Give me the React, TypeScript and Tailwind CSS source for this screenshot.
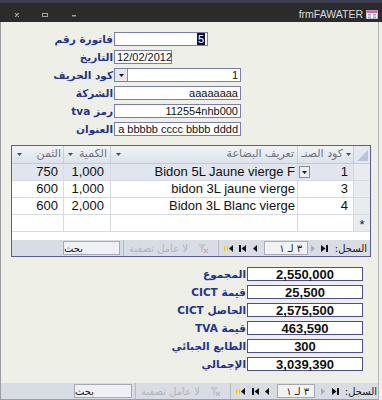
import React from 'react';

const LABEL = "text-[#25338e] font-bold text-[10.5px] leading-none whitespace-nowrap font-['DejaVu_Sans',sans-serif]";

type Field = { label: string; width: string; value: React.ReactNode; align: 'left' | 'right' };

const fields: Field[] = [
  {
    label: 'فاتورة رقم',
    width: 'w-[94px]',
    align: 'right',
    value: <span className="bg-[#101040] text-white px-[1px] leading-[10px]">5</span>,
  },
  { label: 'التاريخ', width: 'w-[58px]', align: 'left', value: '12/02/2012' },
  { label: 'كود الحريف', width: 'w-[127px]', align: 'right', value: '1' },
  { label: 'الشركة', width: 'w-[127px]', align: 'right', value: 'aaaaaaaa' },
  { label: 'رمز tva', width: 'w-[127px]', align: 'right', value: '112554nhb000' },
  { label: 'العنوان', width: 'w-[127px]', align: 'right', value: 'a bbbbb cccc bbbb dddd' },
];

const totals = [
  { label: 'المجموع', value: '2,550,000' },
  { label: 'قيمة CICT', value: '25,500' },
  { label: 'الحاصل CICT', value: '2,575,500' },
  { label: 'قيمة TVA', value: '463,590' },
  { label: 'الطابع الجبائي', value: '300' },
  { label: 'الإجمالي', value: '3,039,390' },
];

const rows = [
  { price: '750', qty: '1,000', desc: 'Bidon 5L Jaune vierge F', code: '1', current: true },
  { price: '600', qty: '1,000', desc: 'bidon 3L jaune vierge', code: '3', current: false },
  { price: '600', qty: '2,000', desc: 'Bidon 3L Blanc vierge', code: '4', current: false },
];

const Arrow = () => (
  <svg width="5" height="3" viewBox="0 0 5 3" className="shrink-0">
    <polygon points="0,0 5,0 2.5,3" fill="#4a4e5a" />
  </svg>
);

const FirstBtn = () => (
  <svg width="7" height="7" viewBox="0 0 7 7">
    <polygon points="0,0 4.5,3.5 0,7" fill="#111" />
    <rect x="5" y="0" width="2" height="7" fill="#111" />
  </svg>
);
const PrevBtn = () => (
  <svg width="4" height="7" viewBox="0 0 4 7">
    <polygon points="0,0 4,3.5 0,7" fill="#a9adb6" />
  </svg>
);
const NextBtn = () => (
  <svg width="4" height="7" viewBox="0 0 4 7">
    <polygon points="4,0 0,3.5 4,7" fill="#111" />
  </svg>
);
const LastBtn = () => (
  <svg width="7" height="7" viewBox="0 0 7 7">
    <rect x="0" y="0" width="2" height="7" fill="#111" />
    <polygon points="7,0 2.5,3.5 7,7" fill="#111" />
  </svg>
);
const NewBtn = () => (
  <svg width="9" height="7" viewBox="0 0 9 7">
    <rect x="0" y="1.5" width="4" height="4" fill="#f2c200" />
    <rect x="1" y="0.5" width="2" height="6" fill="#ffe060" />
    <polygon points="9,0 5,3.5 9,7" fill="#111" />
  </svg>
);
const Funnel = () => (
  <svg width="10" height="9" viewBox="0 0 10 9">
    <polygon points="0,0 8,0 5,4 5,8 3,8 3,4" fill="#c4c8d0" />
    <path d="M6 5 L10 9 M10 5 L6 9" stroke="#c8b0b0" strokeWidth="1.2" />
  </svg>
);

type NavProps = {
  m: [string, string, string, string, string, string, string, string, string, string, string];
  searchW: string;
  boxW: string;
};

function NavBar({ m, searchW, boxW }: NavProps) {
  return (
    <div className="h-[16px] shrink-0 flex items-center bg-[#d8dce4] text-[11px] font-['DejaVu_Sans',sans-serif]">
      <div className={`${m[0]} ${searchW} h-[14px] bg-[#eef0f4] border border-[#a6aab4] flex items-center justify-end pr-[3px] text-[10px] text-[#222]`} dir="rtl">
        بحث
      </div>
      <div className={`${m[1]} w-px h-[16px] bg-[#b4b8c2]`} />
      <div className={`${m[2]} w-[93px] flex items-center justify-end pr-[9px] gap-[10px]`}>
        <span dir="rtl" className="text-[10px] text-[#b0b4bc] whitespace-nowrap">لا عامل تصفية</span>
        <Funnel />
      </div>
      <div className={`${m[3]} w-px h-[16px] bg-[#b4b8c2]`} />
      <div className={`${m[4]} flex`}><NewBtn /></div>
      <div className={`${m[5]} flex`}><LastBtn /></div>
      <div className={`${m[6]} flex`}><NextBtn /></div>
      <div className={`${m[7]} ${boxW} h-[14px] bg-[#f2f2f2] border border-[#a6aab4] flex items-center justify-end pr-[5px] gap-[3px] text-[10px] text-[#222]`}>
        <span>١</span>
        <span>لـ</span>
        <span>٣</span>
      </div>
      <div className={`${m[8]} flex`}><PrevBtn /></div>
      <div className={`${m[9]} flex`}><FirstBtn /></div>
      <div dir="rtl" className={`${m[10]} w-[28px] text-right text-[10px] text-[#1a1a1a] whitespace-nowrap`}>السجل:</div>
    </div>
  );
}

function Datasheet() {
  return (
    <div className="ml-[10px] w-[360px] h-[112px] mt-[5px] border border-[#5c5c9c] flex flex-col bg-white font-['Liberation_Sans',sans-serif]">
      {/* header */}
      <div className="h-[18px] shrink-0 flex bg-linear-to-b from-[#f1f3f7] to-[#dde2ea] border-b border-[#c4c9d4] text-[11px] text-[#70747e] font-['DejaVu_Sans',sans-serif]">
        <div className="w-[52px] flex items-center pl-[5px] border-r border-[#c8ccd6]">
          <Arrow />
          <span dir="rtl" className="flex-1 text-right pr-[2px]">الثمن</span>
        </div>
        <div className="w-[47px] flex items-center pl-[4px] border-r border-[#c8ccd6]">
          <Arrow />
          <span dir="rtl" className="flex-1 text-right pr-[3px]">الكمية</span>
        </div>
        <div className="w-[187px] flex items-center pl-[5px] border-r border-[#c8ccd6]">
          <Arrow />
          <span dir="rtl" className="flex-1 text-right pr-[3px]">تعريف البضاعة</span>
        </div>
        <div className="w-[56px] flex items-center justify-end pr-[2px] gap-[3px] border-r border-[#c8ccd6] overflow-hidden">
          <span dir="rtl" className="whitespace-nowrap">كود الصنـ</span>
          <Arrow />
        </div>
        <div className="w-[16px] flex items-end justify-end p-[2px] bg-[#e4e8ef]">
          <svg width="11" height="11" viewBox="0 0 11 11">
            <polygon points="11,0 11,11 0,11" fill="#b9c4d6" />
          </svg>
        </div>
      </div>
      {rows.map((r, i) => (
        <div key={i} className={`h-[17px] shrink-0 flex border-b border-[#d6dae2] text-[13px] text-[#111] ${r.current ? 'bg-[#e0e5ee]' : ''}`}>
          <div className="w-[52px] flex items-center justify-end pr-[5px] border-r border-[#d6dae2]">{r.price}</div>
          <div className="w-[47px] flex items-center justify-end pr-[6px] border-r border-[#d6dae2]">{r.qty}</div>
          <div className="w-[187px] flex items-center justify-end pr-[2px] border-r border-[#d6dae2] overflow-hidden whitespace-nowrap">{r.desc}</div>
          <div className="w-[56px] flex items-center pl-[1px] pr-[5px] border-r border-[#d6dae2]">
            {r.current && (
              <div className="w-[11px] h-[12px] bg-[#eceef2] border border-[#8a8e98] flex items-center justify-center">
                <svg width="5" height="3" viewBox="0 0 5 3">
                  <polygon points="0,0 5,0 2.5,3" fill="#111" />
                </svg>
              </div>
            )}
            <span className="ml-auto">{r.code}</span>
          </div>
          <div className="w-[16px] bg-[#e8ebf0]" />
        </div>
      ))}
      <div className="h-[17px] shrink-0 flex border-b border-[#d6dae2]">
        <div className="w-[52px] border-r border-[#d6dae2]" />
        <div className="w-[47px] border-r border-[#d6dae2]" />
        <div className="w-[187px] border-r border-[#d6dae2]" />
        <div className="w-[56px] border-r border-[#d6dae2]" />
        <div className="w-[16px] bg-[#e8ebf0] flex items-center justify-center text-[13px] text-[#222] leading-none pt-[3px]">*</div>
      </div>
      <div className="flex-1" />
      <NavBar
        m={['ml-[51px]', 'ml-[3px]', 'ml-0', 'ml-px', 'ml-[5px]', 'ml-[6px]', 'ml-[7px]', 'ml-[7px]', 'ml-[3px]', 'ml-[6px]', 'ml-[11px]']}
        searchW="w-[57px]"
        boxW="w-[44px]"
      />
    </div>
  );
}

export default function App() {
  return (
    <div className="w-[382px] h-[400px] overflow-hidden flex flex-col bg-[#eef0e8] font-['Liberation_Sans','DejaVu_Sans',sans-serif]">
      {/* title bar */}
      <div className="h-[22px] shrink-0 flex items-center bg-[#2b2b2b] border-t-[3px] border-[#3b3d4e]">
        <div className="flex items-center pl-[15px] pt-[4px]">
          <svg width="4" height="4" viewBox="0 0 4 4">
            <path d="M0 0 L4 4 M4 0 L0 4" stroke="#a8a8a8" strokeWidth="1.2" />
          </svg>
          <svg width="6" height="4" viewBox="0 0 6 4" className="ml-[23px]">
            <rect x="0.5" y="0.5" width="5" height="3" fill="none" stroke="#a0a0a0" />
          </svg>
          <svg width="4" height="2" viewBox="0 0 4 2" className="ml-[24px] mt-[3px]">
            <rect x="0" y="0" width="4" height="1.5" fill="#a0a0a0" />
          </svg>
        </div>
        <div className="ml-auto flex items-center pr-[4px] pt-[3px]">
          <span className="text-[10.5px] text-[#dadada] leading-none">frmFAWATER</span>
          <svg width="12" height="9" viewBox="0 0 12 9" className="ml-[3px]">
            <rect x="0" y="0" width="12" height="9" fill="#f4f4f8" stroke="#8a90b0" strokeWidth="1" />
            <rect x="0.5" y="0.5" width="11" height="2.5" fill="#c868a8" />
            <rect x="2" y="4" width="3" height="1.5" fill="#9aa2c8" />
            <rect x="7" y="4" width="3" height="1.5" fill="#9aa2c8" />
            <rect x="2" y="6.5" width="3" height="1.5" fill="#9aa2c8" />
            <rect x="7" y="6.5" width="3" height="1.5" fill="#9aa2c8" />
          </svg>
        </div>
      </div>

      {/* form body */}
      <div className="flex-1 flex flex-col border-l border-[#9c9ea4] border-r border-r-[#b0b2b8] mr-[3px] pt-[10px]">
        {fields.map((f, i) => (
          <div key={i} className="flex items-center h-[14px] mb-[4px]">
            <div dir="rtl" className={`w-[112px] text-right ${LABEL}`}>{f.label}</div>
            <div className={`ml-[1px] ${f.width} h-[14px] bg-white border border-[#7c7cb4] flex items-center text-[11px] text-[#111] ${f.align === 'right' ? 'justify-end pr-[2px]' : 'pl-[2px]'}`}>
              {i === 2 && (
                <div className="w-[13px] h-[12px] bg-[#e6e8ec] border-r border-[#8a8e98] flex items-center justify-center mr-auto">
                  <svg width="5" height="3" viewBox="0 0 5 3">
                    <polygon points="0,0 5,0 2.5,3" fill="#111" />
                  </svg>
                </div>
              )}
              <span className="whitespace-nowrap">{f.value}</span>
            </div>
          </div>
        ))}

        <Datasheet />

        <div className="mt-[10px] flex flex-col">
          {totals.map((t, i) => (
            <div key={i} className="flex items-center h-[14px] mb-[4px]">
              <div dir="rtl" className={`w-[245px] text-right ${LABEL}`}>{t.label}</div>
              <div className="ml-[1px] w-[116px] h-[14px] bg-white border border-[#4c4c98] flex items-center justify-center text-[13px] font-bold text-[#111] leading-none">
                {t.value}
              </div>
            </div>
          ))}
        </div>

        <div className="flex-1" />
        <NavBar
          m={['ml-[73px]', 'ml-[3px]', 'ml-0', 'ml-px', 'ml-[5px]', 'ml-[7px]', 'ml-[6px]', 'ml-[8px]', 'ml-[6px]', 'ml-[7px]', 'ml-[10px]']}
          searchW="w-[58px]"
          boxW="w-[38px]"
        />
        <div className="h-[1px] bg-[#9c9ea4]" />
      </div>
    </div>
  );
}
